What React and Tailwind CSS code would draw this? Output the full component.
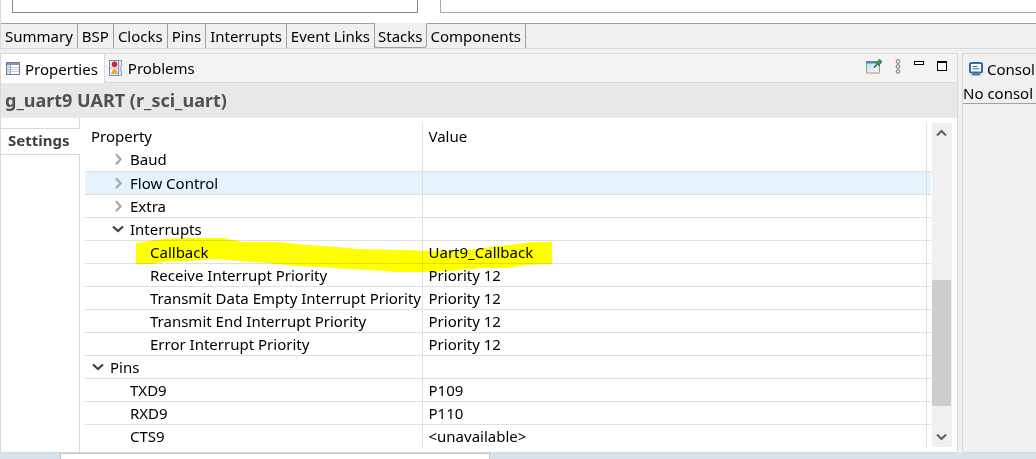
import { useState } from "react";

const EDITOR_TABS = ["Summary", "BSP", "Clocks", "Pins", "Interrupts", "Event Links", "Stacks", "Components"];

// level: indent depth, open: undefined for leaf rows
const ROWS = [
  { name: "Baud", level: 1, open: false },
  { name: "Flow Control", level: 1, open: false, hot: true },
  { name: "Extra", level: 1, open: false },
  { name: "Interrupts", level: 1, open: true },
  { name: "Callback", level: 2, value: "Uart9_Callback", marked: true },
  { name: "Receive Interrupt Priority", level: 2, value: "Priority 12" },
  { name: "Transmit Data Empty Interrupt Priority", level: 2, value: "Priority 12" },
  { name: "Transmit End Interrupt Priority", level: 2, value: "Priority 12" },
  { name: "Error Interrupt Priority", level: 2, value: "Priority 12" },
  { name: "Pins", level: 0, open: true },
  { name: "TXD9", level: 1, value: "P109" },
  { name: "RXD9", level: 1, value: "P110" },
  { name: "CTS9", level: 1, value: "<unavailable>" },
];

const INDENT = ["pl-[5px]", "pl-[25px]", "pl-[45px]"];

function Chevron({ open }) {
  return (
    <svg width="16" height="16" viewBox="0 0 16 16" fill="none" aria-hidden="true">
      {open ? (
        <path d="M3 5.500l5 4.600L13 5.500" stroke="#404040" strokeWidth="2.200" />
      ) : (
        <path d="M6 3.200l4.600 5L6 13.200" stroke="#a6a6a6" strokeWidth="2.200" />
      )}
    </svg>
  );
}

function PropertiesIcon() {
  return (
    <svg width="14" height="13" viewBox="0 0 14 13" shapeRendering="crispEdges" aria-hidden="true">
      <rect x="0" y="0" width="14" height="13" fill="#6d7c9b" />
      <rect x="1" y="1" width="12" height="2" fill="#8797b6" />
      <rect x="1" y="3" width="4" height="9" fill="#cfe0f2" />
      <rect x="5" y="3" width="8" height="9" fill="#fff" />
      <path d="M1 5.500h12M1 7.500h12M1 9.500h12" stroke="#c6cfdd" />
      <path d="M4.500 3v9" stroke="#8fa0bd" />
    </svg>
  );
}

function ProblemsIcon() {
  return (
    <svg width="14" height="16" viewBox="0 0 14 16" aria-hidden="true">
      <path d="M.5.5h9v15h-9z" fill="#eaf1f8" stroke="#6c87ad" />
      <path d="M9.500.5h3.500c-1.800 2 .6 4-1 6.500c-1.500 2.500 1.500 5 .5 8.500h-3z" fill="#d8e4f0" stroke="#7b8fab" strokeWidth=".8" />
      <path d="M1 8h8.500" stroke="#a9bad0" />
      <circle cx="5.500" cy="4.300" r="2.800" fill="#d8232e" />
      <path d="M2.500 13.500c1-1 1-4 3-4s2 3 3 4z" fill="#f3a72c" stroke="#dd8f1b" strokeWidth=".6" />
    </svg>
  );
}

function PinIcon() {
  return (
    <svg width="16" height="15" viewBox="0 0 16 15" aria-hidden="true">
      <defs>
        <linearGradient id="pinPane" x1="0" y1="0" x2="1" y2="1">
          <stop offset="0" stopColor="#b9dcf4" />
          <stop offset="1" stopColor="#fdfefe" />
        </linearGradient>
      </defs>
      <path d="M.5 2.500h13v11.500h-13z" fill="url(#pinPane)" stroke="#a29a78" />
      <path d="M0 2h10v2.500H0z" fill="#4b8ac6" />
      <path d="M8 8.500l3-3.200" stroke="#2c3e4c" strokeWidth="1.200" />
      <path d="M9.200 3.400l2.300-.4 1-2 1.500-.6 2 2-.6 1.600-1.800.9-.4 2.300z" fill="#3f9a45" stroke="#2f7d36" strokeWidth=".7" />
    </svg>
  );
}

function MenuIcon() {
  return (
    <svg width="6" height="15" viewBox="0 0 6 15" fill="#fff" stroke="#6a6a6a" aria-hidden="true">
      <circle cx="3" cy="2.500" r="1.800" />
      <circle cx="3" cy="7.500" r="1.800" />
      <circle cx="3" cy="12.500" r="1.800" />
    </svg>
  );
}

function ConsoleIcon() {
  return (
    <svg width="14" height="14" viewBox="0 0 14 14" aria-hidden="true">
      <rect x="1" y="1" width="12" height="9.500" rx="1" fill="#fff" stroke="#3767ad" strokeWidth="2" />
      <path d="M3.500 4.500h5M3.500 6.800h7" stroke="#47649a" />
      <path d="M3.500 11h7l1 2.500h-9z" fill="#5879ad" />
    </svg>
  );
}

// freehand marker stroke over the callback row
function Marker() {
  return (
    <svg
      className="pointer-events-none absolute top-[-3px] left-[51px] z-10 mix-blend-multiply"
      width="416"
      height="34"
      viewBox="136 238 416 34"
      aria-hidden="true"
    >
      <path
        fill="#ffff00"
        d="M136 243L142 242L163 239L193 238L222 238L243 242L278 242L307 245L337 247L357 249L405 250L423 251L460 251L483 248L517 244L533 242L552 242V264L525 265L507 268L480 268L450 271L423 272L397 272L370 270L347 269L323 267L297 266L267 263L240 261L213 259L190 261L163 262L152 264H136Z"
      />
    </svg>
  );
}

function PropertyTable() {
  return (
    <table className="w-full table-fixed border-collapse text-left">
      <colgroup>
        <col className="w-[337px]" />
        <col />
        <col className="w-[5px]" />
      </colgroup>
      <thead>
        <tr className="h-[25px]">
          <th className="border-r border-[#e0e0e0] p-0 pl-1.5 font-normal">Property</th>
          <th className="border-r border-[#e0e0e0] p-0 pl-1.5 font-normal">Value</th>
          <td className="p-0" />
        </tr>
      </thead>
      <tbody>
        {ROWS.map((row) => (
          <tr
            key={row.name}
            className={`h-[23px] border-b border-[#e0e0e0] last:border-b-0 ${row.hot ? "bg-[#e5f3ff]" : ""}`}
          >
            <td className="relative border-r border-[#e0e0e0] p-0">
              {row.marked && <Marker />}
              <div className={`flex h-[22px] items-center gap-1 overflow-hidden whitespace-nowrap ${INDENT[row.level]}`}>
                {row.open === undefined ? (
                  <span className="w-4 shrink-0" />
                ) : (
                  <button type="button" aria-label={row.name} aria-expanded={row.open} className="shrink-0">
                    <Chevron open={row.open} />
                  </button>
                )}
                {row.name}
              </div>
            </td>
            <td className="border-r border-[#e0e0e0] p-0 pl-1.5">{row.value}</td>
            <td className="p-0" />
          </tr>
        ))}
      </tbody>
    </table>
  );
}

function ScrollBar() {
  return (
    <div className="flex w-5 shrink-0 flex-col items-center bg-[#f0f0f0]">
      <button type="button" aria-label="Scroll up" className="flex h-5 items-center">
        <svg width="18" height="8" viewBox="0 0 18 8" fill="none" aria-hidden="true">
          <path d="M4 6.500L8.500 2L13 6.500" stroke="#606060" strokeWidth="2" />
        </svg>
      </button>
      <div className="flex w-full grow flex-col">
        <div className="grow-[137]" />
        <div className="mr-px grow-[125] bg-[#cdcdcd]" />
        <div className="grow-[21]" />
      </div>
      <button type="button" aria-label="Scroll down" className="flex h-5 items-center">
        <svg width="18" height="8" viewBox="0 0 18 8" fill="none" aria-hidden="true">
          <path d="M4 1.500L8.500 6L13 1.500" stroke="#606060" strokeWidth="2" />
        </svg>
      </button>
    </div>
  );
}

export default function App() {
  const [tab, setTab] = useState("Stacks");

  return (
    <div className="flex min-h-screen flex-col overflow-hidden bg-[#f0f0f0] font-['Noto_Sans','Open_Sans',sans-serif] text-[15px] leading-[22px] text-black">
      {/* editor area */}
      <div className="flex h-[23px] items-start gap-[22px] border-l border-[#d9d9d9] bg-white pl-[11px]">
        <div className="h-[13px] w-[406px] shrink-0 border border-t-0 border-[#828790]" />
        <div className="h-[13px] grow border-b border-l border-[#a5a7aa]" />
      </div>
      <div className="flex h-[26px] border-b border-l border-[#d9d9d9]">
        {EDITOR_TABS.map((name) => (
          <button
            key={name}
            type="button"
            onClick={() => setTab(name)}
            className={
              name === tab
                ? "-ml-px h-[25px] rounded-b-[3px] border border-[#a0a0a0] border-t-transparent px-[3px]"
                : "h-[25px] border-t border-r border-[#a0a0a0] px-1 pb-px"
            }
          >
            {name}
          </button>
        ))}
        <div className="grow border-t border-[#a0a0a0]" />
      </div>

      <div className="mt-1 flex gap-1">
        <section className="flex min-w-0 grow flex-col border border-[#d9d9d9]">
          {/* view tabs */}
          <div className="flex h-[29px] bg-[#f3f3f3]">
            <button type="button" className="flex items-center gap-[5px] border-r border-[#d9d9d9] bg-white pr-1.5 pl-[5px]">
              <PropertiesIcon />
              Properties
            </button>
            <div className="flex grow items-center border-b border-[#d9d9d9]">
              <button type="button" className="flex items-center gap-[5px] px-1">
                <ProblemsIcon />
                Problems
              </button>
              <div className="ml-auto flex items-center gap-[13px] pr-2.5 pb-1">
                <button type="button" aria-label="Pin to selection"><PinIcon /></button>
                <button type="button" aria-label="View menu"><MenuIcon /></button>
                <button type="button" aria-label="Minimize" className="mb-1.5 h-1 w-2.5 border border-black bg-white" />
                <button type="button" aria-label="Maximize" className="h-2.5 w-2.5 border border-t-2 border-black bg-white" />
              </div>
            </div>
          </div>
          <h1 className="h-[35px] bg-[#e8e8e8] pl-1 text-[18px] leading-[35px] font-bold text-[#505050]">
            g_uart9 UART (r_sci_uart)
          </h1>

          <div className="flex bg-white">
            <nav className="flex w-[79px] shrink-0 flex-col">
              <div className="h-2.5 border-r border-[#d9d9d9]" />
              <button type="button" className="h-[27px] border-y border-[#d9d9d9] pb-[3px] pl-[7px] text-left font-bold text-[#404040]">
                Settings
              </button>
              <div className="grow border-r border-[#d9d9d9]" />
            </nav>
            <div className="flex min-w-0 grow gap-px py-[5px] pr-[5px] pl-[5px]">
              <div className="min-w-0 grow">
                <PropertyTable />
              </div>
              <ScrollBar />
            </div>
          </div>
        </section>

        <section className="w-[74px] shrink-0 overflow-hidden border-t border-b border-l border-[#d9d9d9] whitespace-nowrap">
          <button type="button" className="flex h-[29px] items-center gap-1 pl-1.5">
            <ConsoleIcon />
            Consol
          </button>
          <p className="h-[21px] w-full border-b border-[#a0a0a0] leading-[20px]">No consol</p>
        </section>
      </div>

      {/* taskbar */}
      <div className="flex grow bg-[#d5e3ec] pl-[60px]">
        <div className="h-1.5 w-[430px] border border-b-0 border-[#c4c4c4] bg-white" />
      </div>
    </div>
  );
}
